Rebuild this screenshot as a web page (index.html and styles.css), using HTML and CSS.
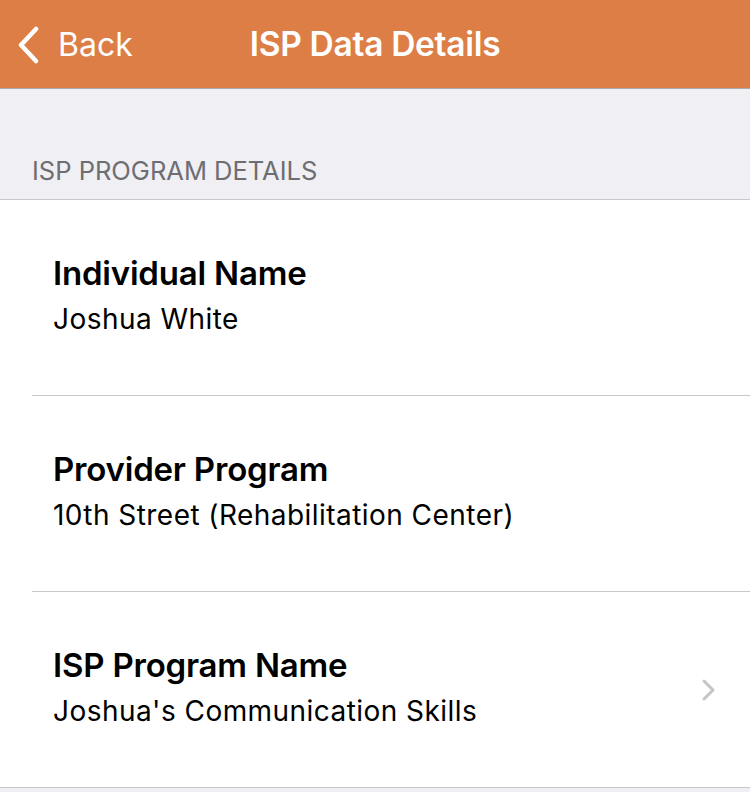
FILE: index.html
```html
<!DOCTYPE html>
<html lang="en">
<head>
  <meta charset="UTF-8">
  <meta name="viewport" content="width=device-width, initial-scale=1.0">
  <title>ISP Data Details</title>

  <link rel="stylesheet" href="styles.css">
</head>
<body>
  <div class="navbar">
    <a class="back" href="#">
      <svg class="back-icon" width="24" height="38" viewBox="0 0 24 38">
        <path d="M20 3 L5 19 L20 35" fill="none" stroke="#fff" stroke-width="4.5" stroke-linecap="round" stroke-linejoin="round"/>
      </svg>
      <span>Back</span>
    </a>
    <div class="nav-title">ISP Data Details</div>
  </div>

  <div class="section-header">ISP PROGRAM DETAILS</div>

  <ul class="list">
    <li class="row">
      <div class="row-text">
        <div class="row-label">Individual Name</div>
        <div class="row-value">Joshua White</div>
      </div>
    </li>
    <li class="row">
      <div class="row-text">
        <div class="row-label">Provider Program</div>
        <div class="row-value">10th Street (Rehabilitation Center)</div>
      </div>
    </li>
    <li class="row">
      <div class="row-text">
        <div class="row-label">ISP Program Name</div>
        <div class="row-value">Joshua's Communication Skills</div>
      </div>
      <svg class="chevron" width="16" height="24" viewBox="0 0 16 24">
        <path d="M4 3 L13 12 L4 21" fill="none" stroke="#c4c4c9" stroke-width="3" stroke-linecap="round" stroke-linejoin="round"/>
      </svg>
    </li>
  </ul>
</body>
</html>
```

FILE: styles.css
```css
body {
  font-family: Inter, "Liberation Sans", Arial, sans-serif;
  margin: 0;
  padding: 0;
  background: #efeff4;
  color: #000;
}

.navbar {
  position: relative;
  height: 88px;
  background: #dc7e45;
  border-bottom: 1px solid #a9a9a9;
  display: flex;
  align-items: center;
  justify-content: center;
}

.back {
  position: absolute;
  left: 16px;
  top: 25px;
  display: flex;
  align-items: center;
  gap: 18px;
  color: #fff;
  text-decoration: none;
  font-size: 32px;
}

.nav-title {
  color: #fff;
  font-size: 33.5px;
  font-weight: 600;
  letter-spacing: -0.3px;
}

.section-header {
  padding: 68px 32px 14px;
  font-size: 25.5px;
  color: #6d6d72;
  line-height: 28px;
  border-bottom: 1px solid #c8c7cc;
}

.list {
  list-style: none;
  margin: 0;
  padding: 0 0 0 32px;
  background: #fff;
  border-bottom: 1px solid #c8c7cc;
}

.row {
  height: 195px;
  display: flex;
  align-items: center;
  padding: 0 34px 0 21px;
  border-bottom: 1px solid #c8c7cc;
}

.row:last-child {
  border-bottom: none;
}

.row-text {
  flex: 1;
  padding-bottom: 6px;
}

.row-label {
  font-size: 33px;
  font-weight: 600;
  line-height: 40px;
  letter-spacing: -0.2px;
}

.row-value {
  font-size: 28px;
  line-height: 34px;
  margin-top: 9px;
  letter-spacing: 0.45px;
}
```
